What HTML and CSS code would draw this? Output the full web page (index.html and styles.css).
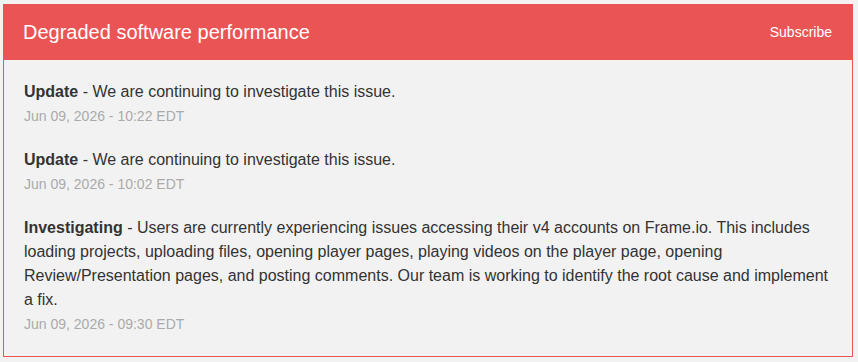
FILE: index.html
```html
<!DOCTYPE html>
<html>
<head>
<meta charset="utf-8">
<link rel="stylesheet" href="styles.css">
</head>
<body>
<div class="incident">
  <div class="incident-header">
    <h2 class="incident-title">Degraded software performance</h2>
    <a class="subscribe" href="#">Subscribe</a>
  </div>
  <div class="incident-body">
    <div class="update">
      <div class="update-text"><strong>Update</strong> - We are continuing to investigate this issue.</div>
      <div class="update-date">Jun 09, 2026 - 10:22 EDT</div>
    </div>
    <div class="update">
      <div class="update-text"><strong>Update</strong> - We are continuing to investigate this issue.</div>
      <div class="update-date">Jun 09, 2026 - 10:02 EDT</div>
    </div>
    <div class="update">
      <div class="update-text"><strong>Investigating</strong> - Users are currently experiencing issues accessing their v4 accounts on Frame.io. This includes loading projects, uploading files, opening player pages, playing videos on the player page, opening Review/Presentation pages, and posting comments. Our team is working to identify the root cause and implement a fix.</div>
      <div class="update-date">Jun 09, 2026 - 09:30 EDT</div>
    </div>
  </div>
</div>
</body>
</html>
```

FILE: styles.css
```css
html, body {
  margin: 0;
  padding: 0;
  background: #f2f2f2;
}
body {
  padding: 4px 3px;
  font-family: "Liberation Sans", Arial, sans-serif;
}
.incident {
  width: 850px;
  box-sizing: border-box;
  border: 1px solid #eb5454;
  border-top: none;
  background: #f2f2f2;
}
.incident-header {
  background: #eb5454;
  height: 56px;
  margin: 0 -1px;
  display: flex;
  align-items: center;
  justify-content: space-between;
  padding: 0 21px 0 20px;
}
.incident-title {
  margin: 0;
  color: #fff;
  font-size: 20px;
  font-weight: normal;
}
.subscribe {
  color: #fff;
  font-size: 14px;
  text-decoration: none;
}
.incident-body {
  padding: 20px 20px 20px 20px;
  display: flex;
  flex-direction: column;
  gap: 20px;
}
.update-text {
  color: #333;
  font-size: 16px;
  line-height: 24px;
}
.update-text strong {
  font-weight: bold;
}
.update-date {
  color: #aaa;
  font-size: 14px;
  line-height: 24px;
}
```
